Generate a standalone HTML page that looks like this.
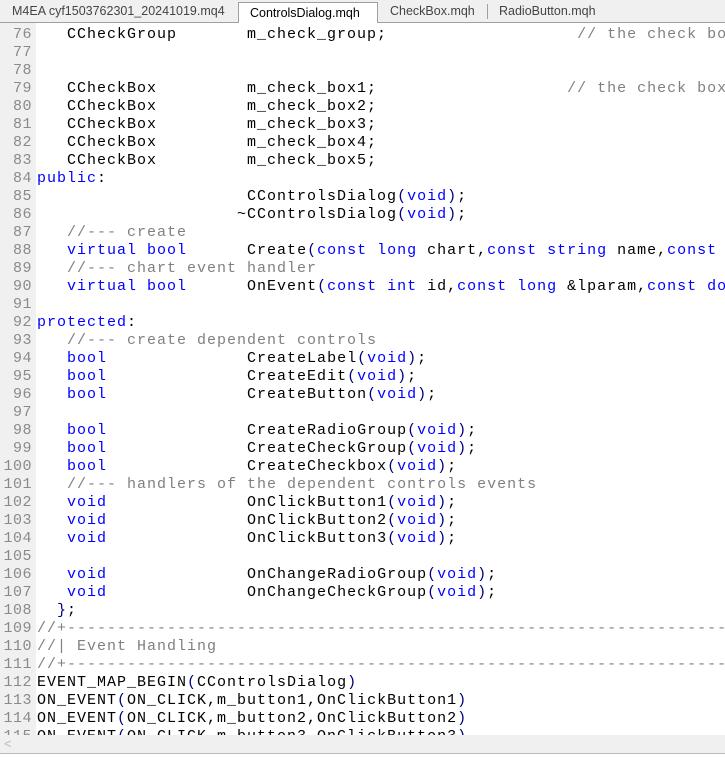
<!DOCTYPE html>
<html><head><meta charset="utf-8"><style>
body{margin:0;width:725px;height:772px;overflow:hidden;background:#fff;font-family:"Liberation Sans",sans-serif;position:relative}
.tabs{position:absolute;left:0;top:0;width:725px;height:22px;background:#f0f0f0;border-bottom:1px solid #a0a0a0;font-size:12.5px;color:#444}
.tab{position:absolute;top:0;height:22px;line-height:23px;white-space:nowrap}
.act{background:#fff;border:1px solid #a0a0a0;border-bottom:none;top:2px;height:21px;line-height:20px;color:#000}
.sep{position:absolute;top:4px;width:1px;height:15px;background:#a0a0a0}
.gut{position:absolute;left:0;top:23px;width:36px;height:712px;background:#f0f0f0}
.code{position:absolute;left:0;top:26px;width:725px;height:709px;overflow:hidden;font-family:"Liberation Mono",monospace;font-size:15px;letter-spacing:1px}
.l{height:18px;line-height:18px;white-space:pre;position:relative}
.n{display:inline-block;width:32px;text-align:right;color:#8a8a8a;margin-right:5px;letter-spacing:0.5px}
.k{color:#0000ff}.c{color:#808080}.p{color:#000080}
.sb{position:absolute;left:0;top:735px;width:725px;height:18px;background:#f0f0f0;border-bottom:1px solid #bbb}
</style></head><body>
<div class="tabs">
<div class="tab" style="left:12px">M4EA cyf1503762301_20241019.mq4</div>
<div class="tab act" style="left:238px;width:140px;padding-left:11px;box-sizing:border-box">ControlsDialog.mqh</div>
<div class="tab" style="left:390px">CheckBox.mqh</div>
<div class="sep" style="left:487px"></div>
<div class="tab" style="left:499px">RadioButton.mqh</div>
</div>
<div class="gut"></div>
<div class="code">
<div class="l"><span class="n">76</span>   CCheckGroup       m_check_group;                   <span class="c">// the check box</span></div>
<div class="l"><span class="n">77</span></div>
<div class="l"><span class="n">78</span></div>
<div class="l"><span class="n">79</span>   CCheckBox         m_check_box1;                   <span class="c">// the check box</span></div>
<div class="l"><span class="n">80</span>   CCheckBox         m_check_box2;</div>
<div class="l"><span class="n">81</span>   CCheckBox         m_check_box3;</div>
<div class="l"><span class="n">82</span>   CCheckBox         m_check_box4;</div>
<div class="l"><span class="n">83</span>   CCheckBox         m_check_box5;</div>
<div class="l"><span class="n">84</span><span class="k">public</span>:</div>
<div class="l"><span class="n">85</span>                     CControlsDialog<span class="p">(</span><span class="k">void</span><span class="p">)</span>;</div>
<div class="l"><span class="n">86</span>                    ~CControlsDialog<span class="p">(</span><span class="k">void</span><span class="p">)</span>;</div>
<div class="l"><span class="n">87</span>   <span class="c">//--- create</span></div>
<div class="l"><span class="n">88</span>   <span class="k">virtual bool</span>      Create<span class="p">(</span><span class="k">const long</span> chart,<span class="k">const string</span> name,<span class="k">const</span> int</div>
<div class="l"><span class="n">89</span>   <span class="c">//--- chart event handler</span></div>
<div class="l"><span class="n">90</span>   <span class="k">virtual bool</span>      OnEvent<span class="p">(</span><span class="k">const int</span> id,<span class="k">const long</span> &amp;lparam,<span class="k">const double</span></div>
<div class="l"><span class="n">91</span></div>
<div class="l"><span class="n">92</span><span class="k">protected</span>:</div>
<div class="l"><span class="n">93</span>   <span class="c">//--- create dependent controls</span></div>
<div class="l"><span class="n">94</span>   <span class="k">bool</span>              CreateLabel<span class="p">(</span><span class="k">void</span><span class="p">)</span>;</div>
<div class="l"><span class="n">95</span>   <span class="k">bool</span>              CreateEdit<span class="p">(</span><span class="k">void</span><span class="p">)</span>;</div>
<div class="l"><span class="n">96</span>   <span class="k">bool</span>              CreateButton<span class="p">(</span><span class="k">void</span><span class="p">)</span>;</div>
<div class="l"><span class="n">97</span></div>
<div class="l"><span class="n">98</span>   <span class="k">bool</span>              CreateRadioGroup<span class="p">(</span><span class="k">void</span><span class="p">)</span>;</div>
<div class="l"><span class="n">99</span>   <span class="k">bool</span>              CreateCheckGroup<span class="p">(</span><span class="k">void</span><span class="p">)</span>;</div>
<div class="l"><span class="n">100</span>   <span class="k">bool</span>              CreateCheckbox<span class="p">(</span><span class="k">void</span><span class="p">)</span>;</div>
<div class="l"><span class="n">101</span>   <span class="c">//--- handlers of the dependent controls events</span></div>
<div class="l"><span class="n">102</span>   <span class="k">void</span>              OnClickButton1<span class="p">(</span><span class="k">void</span><span class="p">)</span>;</div>
<div class="l"><span class="n">103</span>   <span class="k">void</span>              OnClickButton2<span class="p">(</span><span class="k">void</span><span class="p">)</span>;</div>
<div class="l"><span class="n">104</span>   <span class="k">void</span>              OnClickButton3<span class="p">(</span><span class="k">void</span><span class="p">)</span>;</div>
<div class="l"><span class="n">105</span></div>
<div class="l"><span class="n">106</span>   <span class="k">void</span>              OnChangeRadioGroup<span class="p">(</span><span class="k">void</span><span class="p">)</span>;</div>
<div class="l"><span class="n">107</span>   <span class="k">void</span>              OnChangeCheckGroup<span class="p">(</span><span class="k">void</span><span class="p">)</span>;</div>
<div class="l"><span class="n">108</span>  <span class="p">}</span>;</div>
<div class="l"><span class="n">109</span><span class="c">//+------------------------------------------------------------------</span></div>
<div class="l"><span class="n">110</span><span class="c">//| Event Handling</span></div>
<div class="l"><span class="n">111</span><span class="c">//+------------------------------------------------------------------</span></div>
<div class="l"><span class="n">112</span>EVENT_MAP_BEGIN<span class="p">(</span>CControlsDialog<span class="p">)</span></div>
<div class="l"><span class="n">113</span>ON_EVENT<span class="p">(</span>ON_CLICK,m_button1,OnClickButton1<span class="p">)</span></div>
<div class="l"><span class="n">114</span>ON_EVENT<span class="p">(</span>ON_CLICK,m_button2,OnClickButton2<span class="p">)</span></div>
<div class="l"><span class="n">115</span>ON_EVENT<span class="p">(</span>ON_CLICK,m_button3,OnClickButton3<span class="p">)</span></div>
</div>
<div class="sb"><span style="position:absolute;left:4px;top:0;font-size:13px;color:#bbb;line-height:18px">&lt;</span></div>
</body></html>
